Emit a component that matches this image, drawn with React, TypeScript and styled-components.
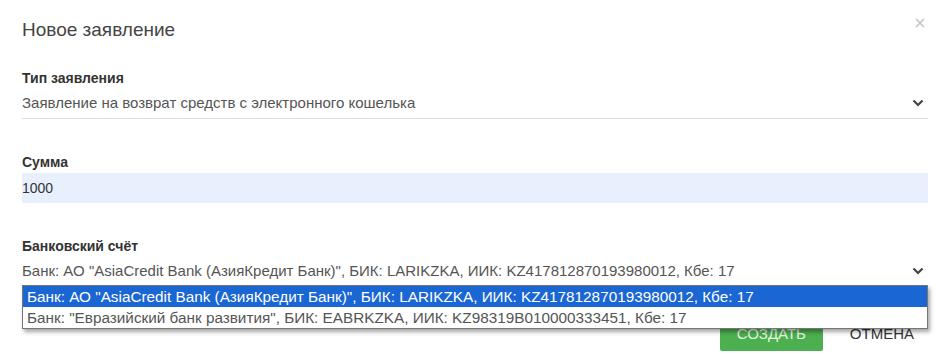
import React from 'react';
import styled, { createGlobalStyle } from 'styled-components';

const GlobalStyle = createGlobalStyle`
  body {
    margin: 0;
    background: #fff;
    font-family: "Liberation Sans", Arial, sans-serif;
  }
`;

const banks = [
  'Банк: АО "AsiaCredit Bank (АзияКредит Банк)", БИК: LARIKZKA, ИИК: KZ417812870193980012, Кбе: 17',
  'Банк: "Евразийский банк развития", БИК: EABRKZKA, ИИК: KZ98319B010000333451, Кбе: 17',
];

const Chevron = () => (
  <svg width="12" height="8" viewBox="0 0 12 8">
    <polyline points="1.5,1.5 6,6 10.5,1.5" fill="none" stroke="#444" strokeWidth="2.2" />
  </svg>
);

const CloseIcon = () => (
  <svg width="10" height="10" viewBox="0 0 10 10">
    <path d="M1 1 L9 9 M9 1 L1 9" stroke="#c4c4c4" strokeWidth="1.6" />
  </svg>
);

export default function App() {
  return (
    <>
      <GlobalStyle />
      <Modal>
        <Header>
          <Title>Новое заявление</Title>
          <CloseButton><CloseIcon /></CloseButton>
        </Header>
        <Body>
          <Field>
            <Label>Тип заявления</Label>
            <Select>
              <span>Заявление на возврат средств с электронного кошелька</span>
              <Chevron />
            </Select>
          </Field>
          <Field>
            <Label>Сумма</Label>
            <Input>1000</Input>
          </Field>
          <Field>
            <Label>Банковский счёт</Label>
            <SelectWrap>
              <Select>
                <span>{banks[0]}</span>
                <Chevron />
              </Select>
              <OptionList>
                {banks.map((b, i) => (
                  <Option key={b} selected={i === 0}>{b}</Option>
                ))}
              </OptionList>
            </SelectWrap>
          </Field>
        </Body>
        <Footer>
          <CreateButton>Создать</CreateButton>
          <CancelButton>Отмена</CancelButton>
        </Footer>
      </Modal>
    </>
  );
}

const Modal = styled.div`
  width: 945px;
  height: 354px;
  box-sizing: border-box;
  padding: 0 17px 0 22px;
  overflow: hidden;
`;

const Header = styled.div`
  display: flex;
  justify-content: space-between;
  align-items: flex-start;
  height: 60px;
`;

const Title = styled.h4`
  margin: 19px 0 0;
  font-size: 19px;
  font-weight: 400;
  line-height: 22px;
  color: #444;
`;

const CloseButton = styled.div`
  margin: 14px 3px 0 0;
`;

const Body = styled.div`
  display: flex;
  flex-direction: column;
  gap: 35px;
  padding-top: 10px;
  width: 906px;
`;

const Field = styled.div`
  display: flex;
  flex-direction: column;
`;

const Label = styled.label`
  font-size: 14px;
  line-height: 16px;
  font-weight: 700;
  color: #333;
  margin-bottom: 1px;
`;

const Select = styled.div`
  display: flex;
  align-items: center;
  justify-content: space-between;
  height: 31px;
  border-bottom: 1px solid #ddd;
  font-size: 15px;
  color: #555;
  padding-right: 4px;
`;

const SelectWrap = styled.div`
  position: relative;
`;

const Input = styled.div`
  display: flex;
  align-items: center;
  margin-top: 2px;
  height: 30px;
  background: #e8f0fe;
  font-size: 14px;
  color: #333;
`;

const OptionList = styled.div`
  position: absolute;
  top: 30px;
  left: 0;
  right: 0;
  background: #fff;
  border: 1px solid #767676;
  box-shadow: 2px 3px 4px rgba(0, 0, 0, 0.35);
  z-index: 2;
`;

const Option = styled.div<{ selected?: boolean }>`
  height: 21px;
  line-height: 21px;
  padding-left: 4px;
  font-size: 15.3px;
  background: ${p => (p.selected ? '#1a66d2' : '#fff')};
  color: ${p => (p.selected ? '#fff' : '#555')};
`;

const Footer = styled.div`
  display: flex;
  justify-content: flex-end;
  gap: 11px;
  margin-top: 28px;
  width: 908px;
`;

const CreateButton = styled.button`
  width: 103px;
  height: 36px;
  border: none;
  border-radius: 2px;
  background: #4caf50;
  color: #e8f5e0;
  font-family: inherit;
  font-size: 15px;
  text-transform: uppercase;
`;

const CancelButton = styled.button`
  height: 36px;
  padding: 0 16px;
  border: none;
  background: transparent;
  color: #333;
  font-family: inherit;
  font-size: 15px;
  text-transform: uppercase;
`;
